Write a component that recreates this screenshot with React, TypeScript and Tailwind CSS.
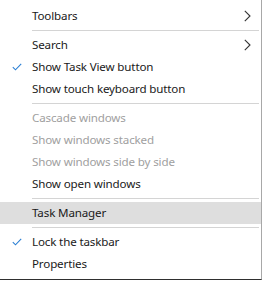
import React, { FC, ReactElement } from 'react';

type Item = {
	label?: string;
	sep?: boolean;
	checked?: boolean;
	disabled?: boolean;
	submenu?: boolean;
	active?: boolean;
};

const items: Item[] = [
	{ label: 'Toolbars', submenu: true },
	{ sep: true },
	{ label: 'Search', submenu: true },
	{ label: 'Show Task View button', checked: true },
	{ label: 'Show touch keyboard button' },
	{ sep: true },
	{ label: 'Cascade windows', disabled: true },
	{ label: 'Show windows stacked', disabled: true },
	{ label: 'Show windows side by side', disabled: true },
	{ label: 'Show open windows' },
	{ sep: true },
	{ label: 'Task Manager', active: true },
	{ sep: true },
	{ label: 'Lock the taskbar', checked: true },
	{ label: 'Properties' },
];

const Check: FC = (): ReactElement => (
	<svg width="10" height="8" viewBox="0 0 10 8" fill="none">
		<path d="M0.8 4.2 L3.5 6.8 L9.2 0.8" stroke="#2a7fd4" strokeWidth="1.1" />
	</svg>
);

const Chevron: FC = (): ReactElement => (
	<svg width="7" height="12" viewBox="0 0 7 12" fill="none">
		<path d="M0.8 0.8 L6 6 L0.8 11.2" stroke="#333" strokeWidth="1.1" />
	</svg>
);

const App: FC = (): ReactElement => {
	return (
		<div className="w-[264px] h-[281px] bg-white overflow-hidden" style={{ fontFamily: '"Noto Sans", "Open Sans", sans-serif' }}>
			<div className="w-[262px] h-[280px] border-r border-b border-r-[#a8a8a8] border-b-[#2f2f2f] pt-[5px]">
				{items.map((it, i) =>
					it.sep ? (
						<div key={i} className="h-[7px] flex items-center pl-8 pr-[2px]">
							<div className="w-full h-px bg-[#d4d4d4]" />
						</div>
					) : (
						<div
							key={i}
							className={`h-[22px] flex items-center text-[11.6px] tracking-[-0.15px] ${it.active ? 'bg-[#dedede]' : ''} ${
								it.disabled ? 'text-[#a0a0a0]' : 'text-[#1a1a1a]'
							}`}
						>
							<div className="w-8 flex justify-center pl-[2px]">{it.checked && <Check />}</div>
							<span className="flex-1 leading-none">{it.label}</span>
							<div className="w-[16px] mr-[6px] flex justify-center">{it.submenu && <Chevron />}</div>
						</div>
					)
				)}
			</div>
		</div>
	);
};

export default App;
